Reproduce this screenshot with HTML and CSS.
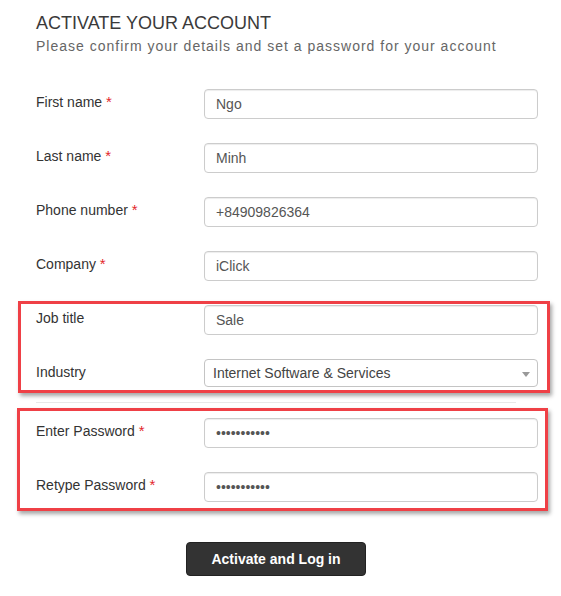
FILE: index.html
```html
<!DOCTYPE html>
<html lang="en">
<head>
<meta charset="utf-8">
<title>Activate your account</title>
<link rel="stylesheet" href="styles.css">
</head>
<body>
<div class="page">
  <h1 class="title">ACTIVATE YOUR ACCOUNT</h1>
  <p class="subtitle">Please confirm your details and set a password for your account</p>

  <form class="form">
    <div class="row">
      <label class="label">First name <span class="req">*</span></label>
      <input class="input" type="text" value="Ngo">
    </div>
    <div class="row">
      <label class="label">Last name <span class="req">*</span></label>
      <input class="input" type="text" value="Minh">
    </div>
    <div class="row">
      <label class="label">Phone number <span class="req">*</span></label>
      <input class="input" type="text" value="+84909826364">
    </div>
    <div class="row">
      <label class="label">Company <span class="req">*</span></label>
      <input class="input" type="text" value="iClick">
    </div>

    <div class="group group-one">
      <div class="row">
        <label class="label">Job title</label>
        <input class="input" type="text" value="Sale">
      </div>
      <div class="row row-last">
        <label class="label">Industry</label>
        <div class="select">
          <span class="select-text">Internet Software &amp; Services</span>
          <span class="select-arrow"></span>
        </div>
      </div>
    </div>

    <div class="separator"></div>

    <div class="group group-two">
      <div class="row">
        <label class="label">Enter Password <span class="req">*</span></label>
        <input class="input" type="password" value="12345678901">
      </div>
      <div class="row row-last">
        <label class="label">Retype Password <span class="req">*</span></label>
        <input class="input" type="password" value="12345678901">
      </div>
    </div>

    <div class="actions">
      <button class="btn" type="button">Activate and Log in</button>
    </div>
  </form>
</div>
</body>
</html>
```

FILE: styles.css
```css
* { box-sizing: border-box; }

html, body {
  margin: 0;
  padding: 0;
  background: #fff;
}

body {
  font-family: "Liberation Sans", Arial, sans-serif;
  font-size: 14px;
  color: #333;
}

.page {
  width: 538px;
  padding-left: 36px;
  padding-top: 12px;
}

.title {
  margin: 0;
  font-size: 18px;
  line-height: 22px;
  font-weight: normal;
  color: #3a3a3a;
}

.subtitle {
  margin: 2px 0 0;
  font-size: 14px;
  line-height: 20px;
  letter-spacing: 1px;
  color: #666;
}

.form {
  margin-top: 33px;
  display: flex;
  flex-direction: column;
}

.row {
  display: flex;
  align-items: flex-start;
  margin-bottom: 24px;
}

.row-last {
  margin-bottom: 0;
}

.label {
  width: 168px;
  flex: none;
  padding-top: 3px;
  line-height: 20px;
  color: #333;
}

.req {
  color: #e3262b;
  font-size: 15px;
}

.input {
  flex: 1;
  height: 30px;
  margin: 0;
  padding: 0 11px;
  border: 1px solid #ccc;
  border-radius: 4px;
  box-shadow: inset 0 1px 1px rgba(0, 0, 0, 0.075);
  font-family: "Liberation Sans", Arial, sans-serif;
  font-size: 14px;
  color: #555;
  background: #fff;
}

.select {
  flex: 1;
  position: relative;
  height: 28px;
  border: 1px solid #c4c4c4;
  border-radius: 4px;
  padding-left: 8px;
  line-height: 26px;
  color: #444;
  background: #fff;
}

.select-arrow {
  position: absolute;
  right: 1px;
  top: 1px;
  width: 20px;
  height: 24px;
}

.select-arrow::after {
  content: "";
  position: absolute;
  left: 50%;
  top: 50%;
  margin-left: -4px;
  margin-top: -1px;
  border-style: solid;
  border-width: 5px 4px 0 4px;
  border-color: #999 transparent transparent transparent;
}

.group {
  border: 3px solid #ef4046;
  box-shadow: 2px 3px 4px rgba(0, 0, 0, 0.35);
}

.group-one {
  margin: -4px -12px 0 -18px;
  padding: 1px 9px 3px 15px;
}

.group-two {
  margin: 5px -10px 0 -19px;
  padding: 7px 7px 6px 16px;
}

.separator {
  width: 480px;
  height: 1px;
  margin-top: 9px;
  background: #e8e8e8;
}

.actions {
  margin-top: 31px;
  padding-left: 150px;
}

.btn {
  width: 180px;
  height: 34px;
  margin: 0;
  padding: 0;
  border: 1px solid #222;
  border-radius: 4px;
  background: #333;
  color: #fff;
  font-family: "Liberation Sans", Arial, sans-serif;
  font-size: 14px;
  font-weight: bold;
}
```
